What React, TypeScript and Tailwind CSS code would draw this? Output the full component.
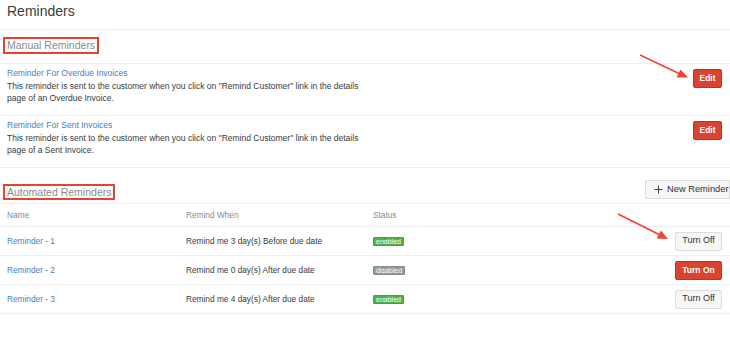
import React from "react";

const Btn = ({ children, red = false, w }: { children: React.ReactNode; red?: boolean; w: string }) => (
  <button
    className={
      red
        ? `${w} h-[19px] rounded-[2px] bg-[#d9432f] border border-[#c0331f] text-white font-bold text-[8.5px] flex items-center justify-center`
        : `${w} h-[19px] rounded-[2px] bg-[#f6f6f6] border border-[#dcdcdc] text-[#333] text-[9px] flex items-center justify-center`
    }
  >
    {children}
  </button>
);

const Badge = ({ on }: { on: boolean }) => (
  <span
    className={
      on
        ? "inline-flex items-center h-[9px] px-[2px] rounded-[1px] bg-[#52b14a] border border-[#46a03f] text-white text-[7px] leading-none"
        : "inline-flex items-center h-[9px] px-[2px] rounded-[1px] bg-[#9a9a9a] border border-[#8a8a8a] text-white text-[7px] leading-none"
    }
  >
    {on ? "enabled" : "disabled"}
  </span>
);

export default function App() {
  const manual = [
    {
      title: "Reminder For Overdue Invoices",
      l1: 'This reminder is sent to the customer when you click on "Remind Customer" link in the details',
      l2: "page of an Overdue Invoice.",
    },
    {
      title: "Reminder For Sent Invoices",
      l1: 'This reminder is sent to the customer when you click on "Remind Customer" link in the details',
      l2: "page of a Sent Invoice.",
    },
  ];
  const autos = [
    { name: "Reminder - 1", when: "Remind me 3 day(s) Before due date", on: true },
    { name: "Reminder - 2", when: "Remind me 0 day(s) After due date", on: false },
    { name: "Reminder - 3", when: "Remind me 4 day(s) After due date", on: true },
  ];
  return (
    <div className="relative w-[730px] h-[349px] bg-white overflow-hidden font-['Liberation_Sans',Arial,sans-serif] text-[#3a3a3a]">
      <div className="h-[30px] border-b border-[#eeeeee] px-[7px] pt-[3px]">
        <h1 className="text-[14px] leading-[16px] text-[#3a3a3a]">Reminders</h1>
      </div>

      <div className="h-[34px] border-b border-[#eeeeee] px-[3px] pt-[7px]">
        <div className="w-fit border-2 border-[#e8412f] px-[2px] text-[10.5px] leading-[13px] text-[#8a8a8a]">
          Manual Reminders
        </div>
      </div>

      {manual.map((m) => (
        <div key={m.title} className="h-[52px] border-b border-[#eeeeee] pl-[7px] pr-[8px] pt-[3px] flex justify-between">
          <div className="text-[8.5px] leading-[12px]">
            <div className="text-[#3f7fc4]">{m.title}</div>
            <div className="mt-[1px]">{m.l1}</div>
            <div>{m.l2}</div>
          </div>
          <div className="pt-[2px]">
            <Btn red w="w-[29px]">Edit</Btn>
          </div>
        </div>
      ))}

      <div className="h-[36px] border-b border-[#eeeeee] pl-[3px] flex items-end justify-between pb-[3px]">
        <div className="border-2 border-[#e8412f] px-[2px] text-[10.5px] leading-[12px] text-[#8a8a8a]">
          Automated Reminders
        </div>
        <button className="w-[85px] h-[19px] mb-[1px] rounded-l-[2px] bg-[#f6f6f6] border border-[#dcdcdc] text-[#333] text-[9.3px] flex items-center pl-[8px] gap-[4px]">
          <svg width="9" height="9" viewBox="0 0 9 9">
            <path d="M4.5 0.5v8M0.5 4.5h8" stroke="#444" strokeWidth="1" />
          </svg>
          New Reminder
        </button>
      </div>

      <div className="h-[23px] border-b border-[#eeeeee] px-[7px] grid grid-cols-[179px_187px_1fr] items-center text-[8.3px] text-[#8a8a8a]">
        <div>Name</div>
        <div>Remind When</div>
        <div>Status</div>
      </div>

      {autos.map((a) => (
        <div key={a.name} className="h-[29px] border-b border-[#eeeeee] pl-[7px] pr-[8px] grid grid-cols-[179px_187px_1fr_auto] items-center text-[8.3px]">
          <div className="text-[#3f7fc4]">{a.name}</div>
          <div>{a.when}</div>
          <div className="flex">
            <Badge on={a.on} />
          </div>
          <Btn red={!a.on} w="w-[47px]">{a.on ? "Turn Off" : "Turn On"}</Btn>
        </div>
      ))}

      <svg className="absolute left-0 top-0 pointer-events-none" width="730" height="349">
        <line x1="640" y1="55" x2="679" y2="73.5" stroke="#ee4431" strokeWidth="1.6" />
        <polygon points="688,77.5 676.5,77.5 680.5,69.5" fill="#ee4431" />
        <line x1="618" y1="214" x2="660" y2="235" stroke="#ee4431" strokeWidth="1.6" />
        <polygon points="668,239 656.5,238.5 661,230.5" fill="#ee4431" />
      </svg>
    </div>
  );
}
